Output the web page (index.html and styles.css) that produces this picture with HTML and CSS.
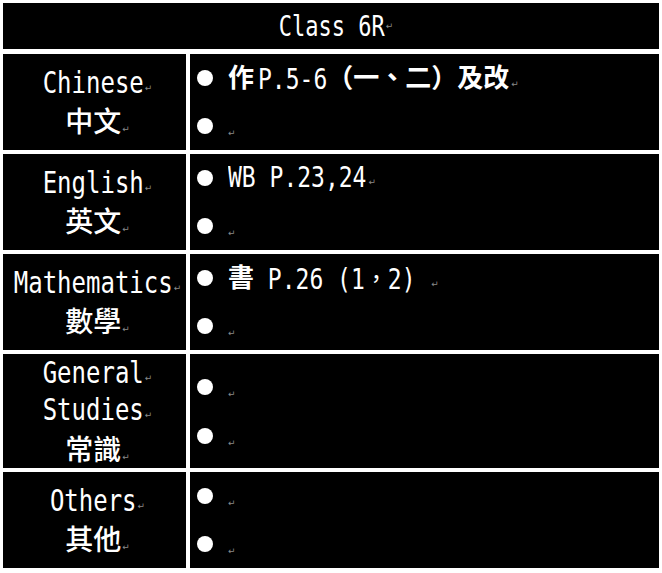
FILE: index.html
```html
<!DOCTYPE html>
<html lang="zh-Hant">
<head>
<meta charset="utf-8">
<title>Class 6R</title>
<link rel="stylesheet" href="styles.css">
</head>
<body>
<div class="sheet">
  <div class="header"><span class="lat">Class 6R</span><span class="pm">↵</span></div>

  <div class="subj">
    <div class="line"><span class="lat">Chinese</span><span class="pm">↵</span></div>
    <div class="line"><span class="cjk">中文</span><span class="pm">↵</span></div>
  </div>
  <div class="tasks">
    <div class="item"><span class="dot"></span><span class="content"><span class="cjkb">作</span><span class="lat tight">P.5-6</span><span class="cjkb">（一、二）及改</span><span class="pm">↵</span></span></div>
    <div class="item"><span class="dot"></span><span class="content empty"><span class="pm">↵</span></span></div>
  </div>

  <div class="subj">
    <div class="line"><span class="lat">English</span><span class="pm">↵</span></div>
    <div class="line"><span class="cjk">英文</span><span class="pm">↵</span></div>
  </div>
  <div class="tasks">
    <div class="item"><span class="dot"></span><span class="content"><span class="lat">WB P.23,24</span><span class="pm">↵</span></span></div>
    <div class="item"><span class="dot"></span><span class="content empty"><span class="pm">↵</span></span></div>
  </div>

  <div class="subj">
    <div class="line"><span class="lat">Mathematics</span><span class="pm">↵</span></div>
    <div class="line"><span class="cjk">數學</span><span class="pm">↵</span></div>
  </div>
  <div class="tasks">
    <div class="item"><span class="dot"></span><span class="content"><span class="cjkb">書</span><span class="lat"> P.26 (1</span><span class="cjkc">，</span><span class="lat">2) </span><span class="pm">↵</span></span></div>
    <div class="item"><span class="dot"></span><span class="content empty"><span class="pm">↵</span></span></div>
  </div>

  <div class="subj">
    <div class="line"><span class="lat">General</span><span class="pm">↵</span></div>
    <div class="line"><span class="lat">Studies</span><span class="pm">↵</span></div>
    <div class="line"><span class="cjk">常識</span><span class="pm">↵</span></div>
  </div>
  <div class="tasks">
    <div class="item"><span class="dot"></span><span class="content empty"><span class="pm">↵</span></span></div>
    <div class="item"><span class="dot"></span><span class="content empty"><span class="pm">↵</span></span></div>
  </div>

  <div class="subj">
    <div class="line"><span class="lat">Others</span><span class="pm">↵</span></div>
    <div class="line"><span class="cjk">其他</span><span class="pm">↵</span></div>
  </div>
  <div class="tasks">
    <div class="item"><span class="dot"></span><span class="content empty"><span class="pm">↵</span></span></div>
    <div class="item"><span class="dot"></span><span class="content empty"><span class="pm">↵</span></span></div>
  </div>
</div>
</body>
</html>
```

FILE: styles.css
```css
html, body {
  margin: 0;
  padding: 0;
  background: #ffffff;
}

body {
  font-family: "DejaVu Sans Mono", "Noto Sans CJK TC", monospace;
  color: #ffffff;
}

.sheet {
  display: grid;
  grid-template-columns: 183px 469px;
  grid-template-rows: 47px 96px 96px 96px 114px 96px;
  column-gap: 4px;
  row-gap: 4px;
  padding: 3px 3px 4px 3px;
}

.header {
  grid-column: 1 / 3;
  background: #000;
  margin-bottom: 1px;
  display: flex;
  align-items: center;
  justify-content: center;
  font-size: 22px;
  line-height: 47px;
  padding-left: 10px;
  white-space: pre;
}

.lat {
  display: inline-block;
  font-family: "DejaVu Sans Mono", monospace;
  transform: scaleY(1.27);
  white-space: pre;
}

.lat.tight {
  margin-left: 4px;
}

.subj {
  background: #000;
  display: flex;
  flex-direction: column;
  justify-content: center;
  align-items: center;
  font-size: 24px;
  padding-left: 6px;
}

.line {
  line-height: 37.5px;
  height: 37.5px;
  white-space: nowrap;
}

.cjk {
  font-family: "Noto Sans CJK TC", sans-serif;
  font-size: 28px;
  font-weight: 500;
}

.tasks {
  background: #000;
  display: flex;
  flex-direction: column;
  justify-content: center;
  padding-left: 7px;
}

.item {
  height: 49px;
  display: flex;
  align-items: center;
  font-size: 23px;
}

.content {
  white-space: pre;
  line-height: 30px;
  margin-top: 3px;
}

.content.empty {
  margin-top: 9px;
}

.dot {
  width: 16px;
  height: 16px;
  border-radius: 50%;
  background: #fff;
  margin-right: 15px;
  flex: none;
}

.cjkb {
  font-family: "Noto Sans CJK TC", sans-serif;
  font-size: 26px;
  font-weight: 700;
}

.cjkc {
  font-family: "Noto Sans CJK TC", sans-serif;
}

.pm {
  font-family: "DejaVu Sans", sans-serif;
  font-size: 9px;
  color: #8a8a8a;
  margin-left: 1px;
  vertical-align: baseline;
}

.content .pm {
  margin-left: 2px;
}

.content.empty .pm {
  margin-left: 0;
}
```
